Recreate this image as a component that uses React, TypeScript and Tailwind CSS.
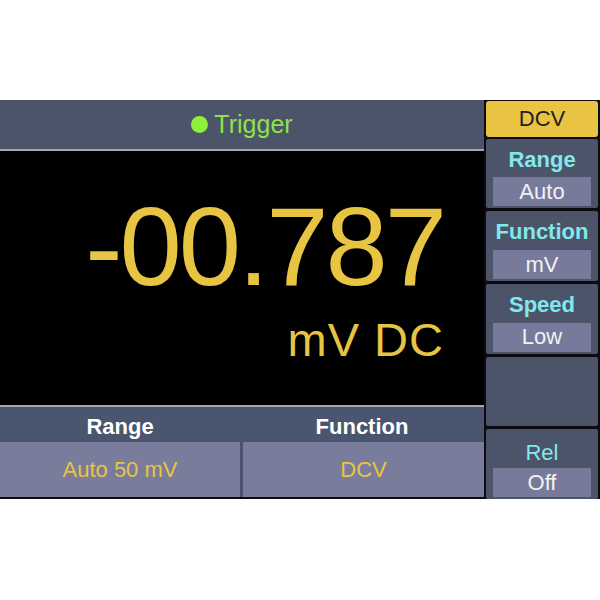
const font = "font-['Liberation_Sans',Arial,sans-serif]";

function SoftKey({ label, value, bold = true }: { label: string; value: string; bold?: boolean }) {
  return (
    <div className="flex h-[70px] flex-col rounded-[2px] bg-[#4b5469] px-[7px] pb-[2px]">
      <div
        className={`flex flex-1 items-center justify-center pt-[3px] text-[22px] leading-none text-[#82e8ec] ${
          bold ? "font-bold" : "pt-[8px]"
        }`}
      >
        {label}
      </div>
      <div className="flex h-[29px] items-center justify-center bg-[#777a9a] text-[22px] leading-none text-[#f2f2f4]">
        {value}
      </div>
    </div>
  );
}

export default function App() {
  return (
    <div className={`flex h-[600px] w-[600px] flex-col bg-white ${font}`}>
      <div className="h-[100px] shrink-0" />
      <div className="flex h-[399px] shrink-0 bg-[#0c0c10]">
        {/* main display column */}
        <div className="flex w-[484px] flex-col">
          <div className="flex h-[49px] items-center justify-center bg-[#4b5469]">
            <span className="mr-[6px] h-[17px] w-[17px] rounded-full bg-[#8ff03e]" />
            <span className="text-[25px] leading-none text-[#8fe24a]">Trigger</span>
          </div>
          <div className="h-[2px] bg-[#a4a8ae]" />
          <div className="flex h-[254px] flex-col items-end bg-black pr-[40px] text-[#e8c443]">
            <div className="mt-[40px] text-[112px] leading-none tracking-[-3px]">-00.787</div>
            <div className="mt-[13px] text-[47px] leading-none tracking-[1px]">mV DC</div>
          </div>
          <div className="h-[2px] bg-[#a4a8ae]" />
          <div className="flex h-[35px] bg-[#4a5570] text-[22px] font-bold leading-none text-white">
            <div className="flex w-[240px] items-center justify-center pt-[4px]">Range</div>
            <div className="flex flex-1 items-center justify-center pt-[4px]">Function</div>
          </div>
          <div className="flex h-[55px] gap-[3px] bg-[#4a5470] text-[22px] leading-none text-[#e8c443]">
            <div className="flex w-[240px] items-center justify-center bg-[#7a7c9b]">Auto 50 mV</div>
            <div className="flex flex-1 items-center justify-center bg-[#7a7c9b]">DCV</div>
          </div>
        </div>

        {/* soft key column */}
        <div className="flex flex-1 flex-col gap-[3px] pl-[2px] pr-[2px] pt-[1px]">
          <div className="mb-[-1px] flex h-[36px] items-center justify-center rounded-[3px] bg-[#e9c443] text-[22px] leading-none text-[#1e1e1e]">
            DCV
          </div>
          <SoftKey label="Range" value="Auto" />
          <SoftKey label="Function" value="mV" />
          <SoftKey label="Speed" value="Low" />
          <div className="h-[70px] rounded-[2px] bg-[#4b5469]" />
          <SoftKey label="Rel" value="Off" bold={false} />
        </div>
      </div>
    </div>
  );
}
